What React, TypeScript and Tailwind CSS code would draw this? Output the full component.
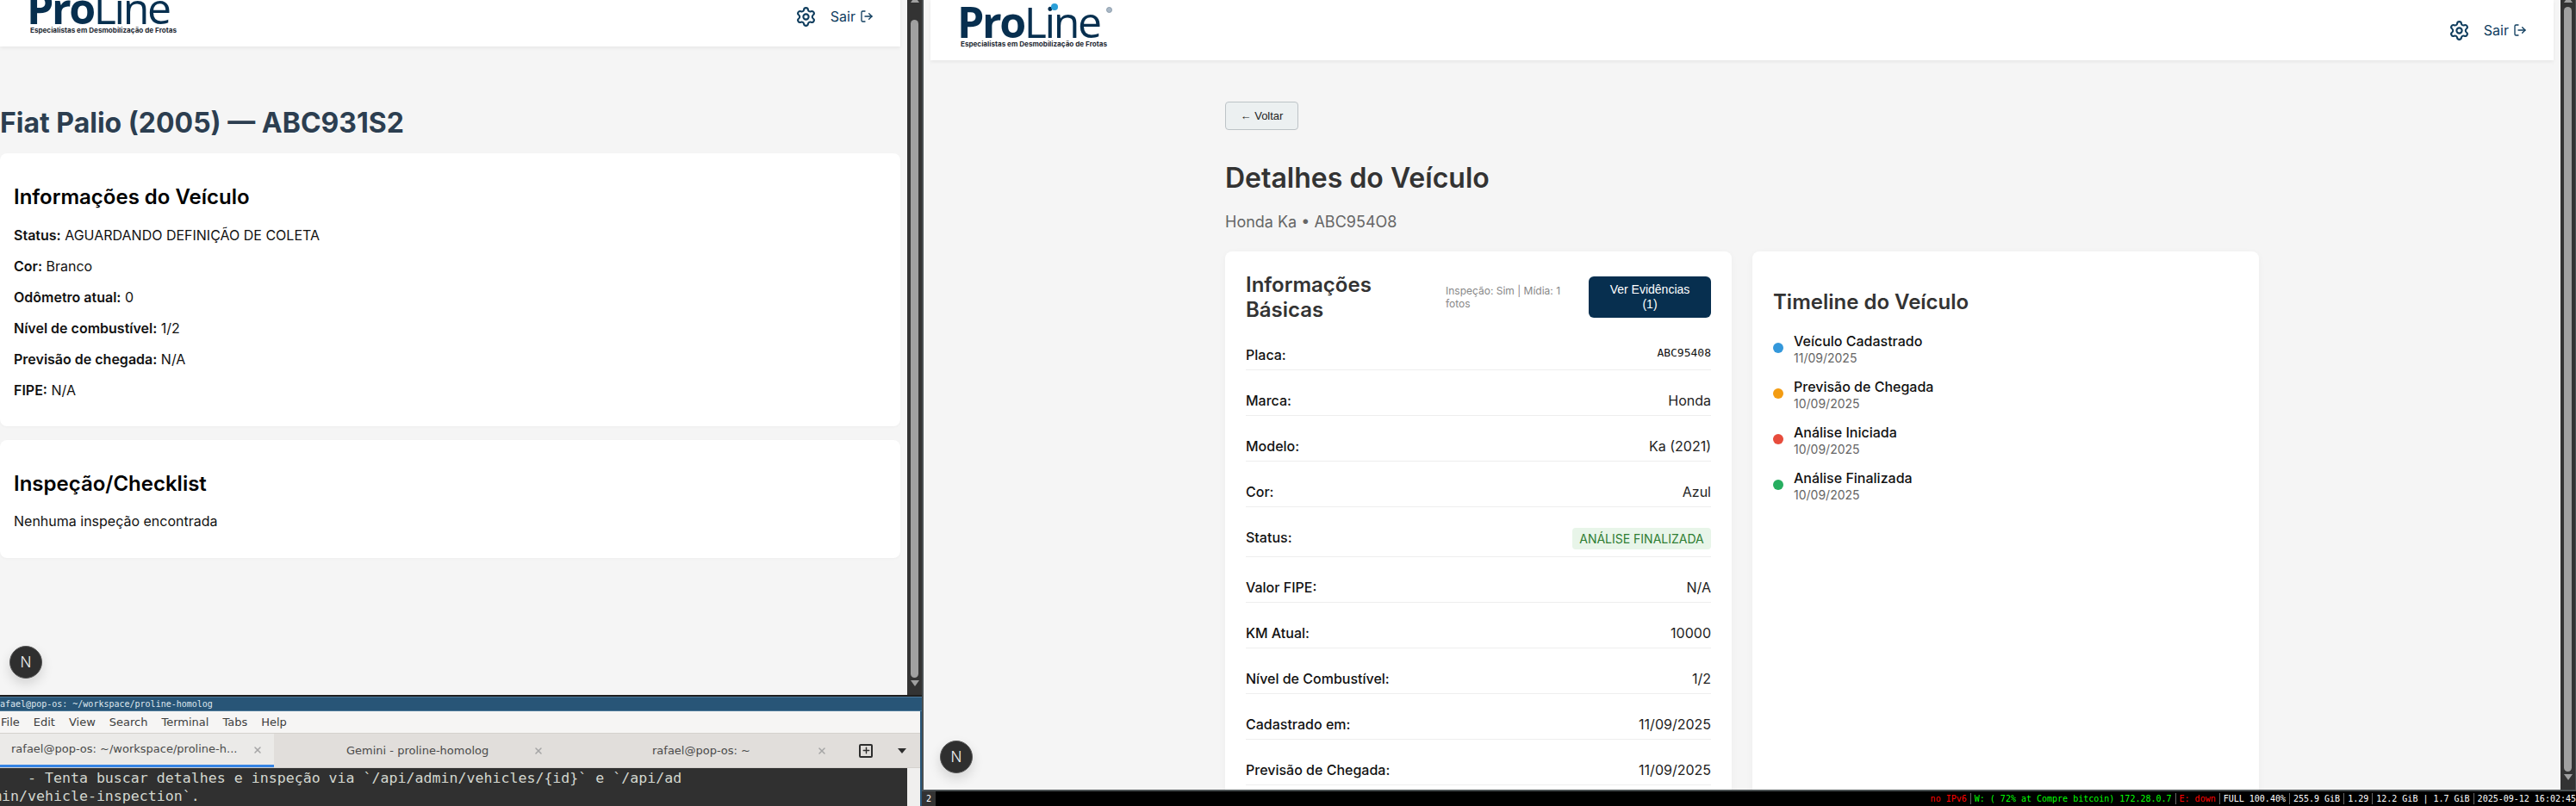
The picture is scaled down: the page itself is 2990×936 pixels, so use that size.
import React from "react";
import { Settings, LogOut, X, Plus } from "lucide-react";

const inter = "font-['Inter',sans-serif]";

function Logo() {
  return (
    <div className="relative -mt-2 w-[190px] h-[50px] text-[#072f4f]">
      <div className="font-['Open_Sans',sans-serif] text-[50px] leading-[38px] tracking-[-2.4px] h-[38px] -ml-[3px] whitespace-nowrap">
        <span className="font-bold">Pro</span>
        <span className="font-medium">Line</span>
      </div>
      <div className={`${inter} font-bold text-[8.1px] leading-[12px] mt-[1px] pl-[1px] text-[#1f2a33] whitespace-nowrap`}>
        Especialistas em Desmobilização de Frotas
      </div>
      <span className="absolute left-[106px] top-[-2px] w-[8px] h-[8px] rounded-full bg-[#2a9fd8]" />
      <span className="absolute left-[170px] top-[2px] w-[7px] h-[7px] rounded-full bg-[#a9b8c6] border border-[#8b9cab]" />
    </div>
  );
}

function Header() {
  return (
    <header className="h-[70px] shrink-0 bg-white shadow-[0_2px_4px_rgba(0,0,0,0.06)] pl-[34px] pr-[31px] flex items-center justify-between text-[#0f3d5e]">
      <Logo />
      <div className={`flex items-center ${inter} text-[16px]`}>
        <Settings size={25} strokeWidth={2} className="mr-[16px]" />
        <span>Sair</span>
        <LogOut size={16} strokeWidth={2} className="ml-[5px]" />
      </div>
    </header>
  );
}

function Field({ k, v }: { k: string; v: string }) {
  return (
    <p className="text-[16px] leading-[20px] mb-[16px] text-[#111]">
      <span className="font-semibold">{k}:</span> {v}
    </p>
  );
}

function Nxt({ cls }: { cls: string }) {
  return (
    <div className={`absolute ${cls} w-[38px] h-[38px] rounded-full bg-[#2f2f2f] border border-[#555] shadow-[0_6px_14px_rgba(0,0,0,0.14)] flex items-center justify-center`}>
      <span className="font-['Inter',sans-serif] font-light text-[#f2f2f2] text-[17px] leading-none">N</span>
    </div>
  );
}

function Scrollbar({ thumbTop, thumbBottom }: { thumbTop: string; thumbBottom: string }) {
  return (
    <div className="w-[17px] shrink-0 bg-[#333] flex flex-col items-center relative">
      <div className="w-0 h-0 mt-[-4px] border-l-[5px] border-r-[5px] border-b-[7px] border-l-transparent border-r-transparent border-b-[#a0a0a0]" />
      <div className={`w-[9px] rounded-t-[5px] rounded-b-[5px] bg-[#a0a0a0] ${thumbTop} ${thumbBottom}`} />
      <div className="w-0 h-0 border-l-[5px] border-r-[5px] border-t-[7px] border-l-transparent border-r-transparent border-t-[#a0a0a0]" />
    </div>
  );
}

function LeftWindow() {
  return (
    <div className="h-[807px] flex shrink-0">
      <div className={`w-[1053px] shrink-0 bg-[#f5f5f5] overflow-hidden relative ${inter}`}>
        <div className="-mt-4 w-[1045px]">
          <Header />
          <h1 className="mt-[69px] text-[32px] leading-[40px] font-bold text-[#2c3e50] whitespace-nowrap">
            Fiat Palio (2005) — ABC931S2
          </h1>
          <section className="mt-[15px] bg-white rounded-[8px] px-4 pt-[37px] h-[317px] shadow-[0_1px_3px_rgba(0,0,0,0.03)]">
            <h2 className="text-[24px] leading-[28px] font-semibold text-black mb-[20px]">Informações do Veículo</h2>
            <Field k="Status" v="AGUARDANDO DEFINIÇÃO DE COLETA" />
            <Field k="Cor" v="Branco" />
            <Field k="Odômetro atual" v="0" />
            <Field k="Nível de combustível" v="1/2" />
            <Field k="Previsão de chegada" v="N/A" />
            <Field k="FIPE" v="N/A" />
          </section>
          <section className="mt-[16px] bg-white rounded-[8px] px-4 pt-[37px] h-[137px] shadow-[0_1px_3px_rgba(0,0,0,0.03)]">
            <h2 className="text-[24px] leading-[28px] font-semibold text-black mb-[19px]">Inspeção/Checklist</h2>
            <p className="text-[16px] leading-[20px] text-[#111]">Nenhuma inspeção encontrada</p>
          </section>
        </div>
        <Nxt cls="left-[11px] top-[750px]" />
      </div>
      <Scrollbar thumbTop="mt-[20px]" thumbBottom="h-[764px] mb-[3px]" />
    </div>
  );
}

const menu = ["File", "Edit", "View", "Search", "Terminal", "Tabs", "Help"];

function Terminal() {
  const sans = "font-['DejaVu_Sans',sans-serif]";
  return (
    <div className="flex-1 flex flex-col min-h-0 overflow-hidden mt-[2px]">
      <div className="h-[17px] shrink-0 bg-[#285577] border-t border-b border-[#4c7899] font-['DejaVu_Sans_Mono',monospace] text-[10px] leading-[15px] text-[#dfe7ee] pl-0 -indent-[6px] whitespace-nowrap">
        rafael@pop-os: ~/workspace/proline-homolog
      </div>
      <div className="flex-1 flex flex-col min-h-0 mr-0 border-r-2 border-[#285577]">
        <div className={`h-[25px] shrink-0 bg-[#f6f5f4] flex items-center gap-[16px] ${sans} text-[13px] text-[#3d3d3d] pl-[1px]`}>
          {menu.map((m) => <span key={m}>{m}</span>)}
        </div>
        <div className={`h-[41px] shrink-0 bg-[#e1dedb] border-t border-[#d5d2ce] border-b flex ${sans} text-[13px] text-[#4a4a4a]`}>
          <div className="w-[318px] shrink-0 bg-[#ebeae8] border-b-[3px] border-[#3584e4] flex items-center pl-[13px] whitespace-nowrap relative">
            rafael@pop-os: ~/workspace/proline-h...
            <X size={12} strokeWidth={3} className="absolute left-[293px] top-[13px] text-[#a5a5a5]" />
          </div>
          <div className="w-[319px] shrink-0 flex items-center pl-[84px] whitespace-nowrap relative">
            Gemini - proline-homolog
            <X size={12} strokeWidth={3} className="absolute left-[301px] top-[14px] text-[#a5a5a5]" />
          </div>
          <div className="w-[331px] shrink-0 flex items-center pl-[120px] whitespace-nowrap relative">
            rafael@pop-os: ~
            <X size={12} strokeWidth={3} className="absolute left-[311px] top-[14px] text-[#a5a5a5]" />
          </div>
          <div className="w-[16px] h-[16px] shrink-0 self-center ml-[29px] border-2 border-[#2e2e2e] rounded-[2px] flex items-center justify-center">
            <Plus size={11} strokeWidth={3} className="text-[#2e2e2e]" />
          </div>
          <div className="ml-[29px] self-center w-0 h-0 border-l-[5px] border-r-[5px] border-t-[6px] border-l-transparent border-r-transparent border-t-[#2e2e2e]" />
        </div>
        <div className="flex-1 min-h-0 flex">
          <div className="w-[1053px] shrink-0 bg-[#303030] font-['DejaVu_Sans_Mono',monospace] text-[16.6px] leading-[21px] text-[#d3d7cf] whitespace-pre -indent-[8px] pt-[1px] overflow-hidden">
            <div>{"    - Tenta buscar detalhes e inspeção via `/api/admin/vehicles/{id}` e `/api/ad"}</div>
            <div>{"min/vehicle-inspection`."}</div>
          </div>
          <div className="flex-1 bg-[#f0efee]" />
        </div>
      </div>
    </div>
  );
}

const rows: [string, string][] = [
  ["Marca", "Honda"],
  ["Modelo", "Ka (2021)"],
  ["Cor", "Azul"],
];
const rows2: [string, string][] = [
  ["Valor FIPE", "N/A"],
  ["KM Atual", "10000"],
  ["Nível de Combustível", "1/2"],
  ["Cadastrado em", "11/09/2025"],
  ["Previsão de Chegada", "11/09/2025"],
];

function Row({ k, children }: { k: string; children: React.ReactNode }) {
  return (
    <div className="flex justify-between items-start pt-px pb-[7px] mb-[24px] border-b border-[#eee] text-[16px] leading-[20px] text-[#222]">
      <span className="font-medium text-[#111]">{k}:</span>
      {children}
    </div>
  );
}

const timeline = [
  ["Veículo Cadastrado", "11/09/2025", "bg-[#3498db]"],
  ["Previsão de Chegada", "10/09/2025", "bg-[#f39c12]"],
  ["Análise Iniciada", "10/09/2025", "bg-[#e74c3c]"],
  ["Análise Finalizada", "10/09/2025", "bg-[#27ae60]"],
];

function RightWindow() {
  return (
    <div className="flex-1 min-h-0 flex">
      <div className={`flex-1 min-w-0 bg-[#f5f5f5] overflow-hidden relative ${inter}`}>
        <div className="mx-[8px]">
          <Header />
          <main className="w-[1200px] mx-auto pt-[48px]">
            <button className="h-[33px] w-[85px] rounded-[4px] border border-[#bdc3c7] bg-[#ecf0f1] text-[13px] text-[#222] font-['Liberation_Sans',sans-serif]">
              ← Voltar
            </button>
            <h1 className="mt-[36px] text-[32px] leading-[40px] font-semibold text-[#333]">Detalhes do Veículo</h1>
            <p className="mt-[20px] text-[18px] leading-[22px] text-[#666]">Honda Ka • ABC954O8</p>
            <div className="mt-[23px] grid grid-cols-2 gap-6 items-stretch">
              <section className="bg-white rounded-[8px] shadow-[0_2px_8px_rgba(0,0,0,0.04)] p-6 h-[700px]">
                <div className="flex items-center h-[58px] mb-[27px]">
                  <h2 className="w-[232px] text-[24px] leading-[29px] font-semibold text-[#333]">Informações Básicas</h2>
                  <div className="w-[136px] text-[12px] leading-[15px] text-[#888] mr-[30px]">Inspeção: Sim | Mídia: 1 fotos</div>
                  <button className="w-[142px] h-[48px] rounded-[6px] bg-[#072f4f] text-white text-[14px] leading-[17px] px-4 font-['Liberation_Sans',sans-serif]">
                    Ver Evidências (1)
                  </button>
                </div>
                <Row k="Placa"><span className="font-['DejaVu_Sans_Mono',monospace] text-[13px] leading-[16px] text-[#111]">ABC95408</span></Row>
                {rows.map(([k, v]) => <Row key={k} k={k}><span>{v}</span></Row>)}
                <Row k="Status">
                  <span className="h-[25px] w-[161px] -mt-px mb-px rounded-[4px] bg-[#e8f5e9] text-[#2e7d32] text-[14px] leading-[25px] text-center">ANÁLISE FINALIZADA</span>
                </Row>
                {rows2.map(([k, v]) => <Row key={k} k={k}><span>{v}</span></Row>)}
              </section>
              <section className="bg-white rounded-[8px] shadow-[0_2px_8px_rgba(0,0,0,0.04)] p-6 pt-[44px] h-[700px]">
                <h2 className="text-[24px] leading-[29px] font-semibold text-[#333] mb-[21px]">Timeline do Veículo</h2>
                <div className="flex flex-col gap-[13px]">
                  {timeline.map(([t, d, c]) => (
                    <div key={t} className="flex items-center gap-3">
                      <span className={`w-3 h-3 -mt-[4px] rounded-full shrink-0 ${c}`} />
                      <div>
                        <div className="text-[16px] leading-[20px] font-medium text-[#111]">{t}</div>
                        <div className="text-[14px] leading-[20px] text-[#666]">{d}</div>
                      </div>
                    </div>
                  ))}
                </div>
              </section>
            </div>
          </main>
        </div>
        <Nxt cls="left-[19px] top-[860px]" />
      </div>
      <Scrollbar thumbTop="mt-[5px]" thumbBottom="h-[888px] mb-[3px]" />
      <div className="w-[1px] bg-[#4a5052]" />
    </div>
  );
}

function Sep() {
  return <span className="inline-block w-px h-[13px] bg-[#666] mx-[4px] align-middle" />;
}

function StatusBar() {
  return (
    <div className="h-[17px] shrink-0 bg-black flex items-center justify-between font-['DejaVu_Sans_Mono',monospace] text-[10px] leading-[17px] whitespace-pre border-t-0">
      <span className="w-[16px] h-[17px] bg-[#333] text-white text-center">2</span>
      <div className="flex items-center">
        <span className="text-[#ff0000]">no IPv6</span><Sep />
        <span className="text-[#00ff00]">W: ( 72% at Compre bitcoin) 172.28.0.7</span><Sep />
        <span className="text-[#ff0000]">E: down</span><Sep />
        <span className="text-white">FULL 100.40%</span><Sep />
        <span className="text-white">255.9 GiB</span><Sep />
        <span className="text-white">1.29</span><Sep />
        <span className="text-white">12.2 GiB | 1.7 GiB</span><Sep />
        <span className="text-white">2025-09-12 16:02:45</span>
      </div>
    </div>
  );
}

export default function App() {
  return (
    <div className="w-[2990px] h-[936px] overflow-hidden flex bg-[#1e1e1e]">
      <div className="w-[1070px] shrink-0 flex flex-col h-full">
        <LeftWindow />
        <Terminal />
      </div>
      <div className="flex-1 min-w-0 flex flex-col h-full">
        <div className="flex-1 min-h-0 flex border-l-2 border-b-2 border-[#4a5052]">
          <RightWindow />
        </div>
        <StatusBar />
      </div>
    </div>
  );
}
